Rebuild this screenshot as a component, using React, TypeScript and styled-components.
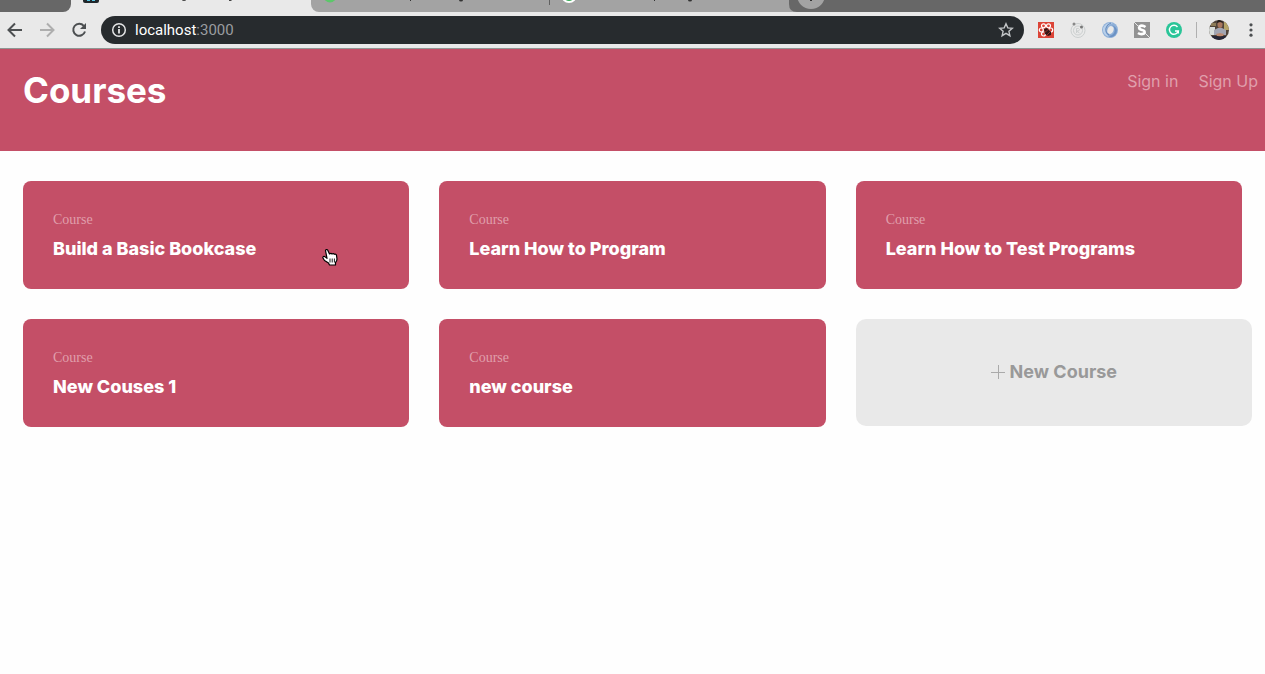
import React from "react";
import styled, { createGlobalStyle } from "styled-components";

const Global = createGlobalStyle`
  * { box-sizing: border-box; }
  body { margin: 0; background: #fefefe; font-family: Inter, sans-serif; overflow-x: hidden; }
  button, input { font: inherit; }
`;

const TabStrip = styled.div`
  display: flex;
  height: 12px;
  background: #e9e9e9;
  overflow: hidden;
`;
const StripEdge = styled.div<{ $side: "left" | "right" }>`
  background: #676767;
  ${(p) => (p.$side === "left" ? "width: 71px; border-bottom-right-radius: 8px;" : "flex: 1;")}
`;
const ActiveTab = styled.div`
  width: 240px;
`;
const IdleTabs = styled.div`
  width: 478px;
  background: #a3a3a3;
  border-bottom-left-radius: 8px;
`;
const NewTabArea = styled.div`
  background: #676767;
`;
const StripArt = styled.svg`
  display: block;
`;

const Toolbar = styled.div`
  display: flex;
  align-items: center;
  height: 37px;
  padding: 0 6px 0 7px;
  background: #e9e9e9;
  border-bottom: 1px solid #8f9693;
`;
const IconButton = styled.button`
  display: flex;
  padding: 0;
  border: 0;
  background: none;
`;
const NavButtons = styled.div`
  display: flex;
  gap: 16px;
  margin-right: 14px;
`;
const AddressBar = styled.div`
  display: flex;
  flex: 1;
  align-items: center;
  height: 28px;
  padding: 0 10px;
  border-radius: 14px;
  background: #272b2e;
`;
const Address = styled.div`
  flex: 1;
  padding-left: 8px;
  font: 15px/20px Roboto, sans-serif;
  color: #9a9da0;
`;
const Host = styled.span`
  color: #fff;
`;
const Extensions = styled.div`
  display: flex;
  align-items: center;
  gap: 16px;
  margin-left: 14px;
`;
const Divider = styled.span`
  width: 1px;
  height: 16px;
  margin: 0 12px 0 14px;
  background: #b0b0b0;
`;
const Profile = styled.div`
  display: flex;
  align-items: center;
  gap: 14px;
`;

const Header = styled.header`
  display: flex;
  justify-content: space-between;
  align-items: flex-start;
  height: 102px;
  padding: 20px 7px 0 23px;
  background: #c44f67;
`;
const Title = styled.h1`
  margin: 0;
  font-size: 35px;
  line-height: 42px;
  font-weight: 700;
  color: #fff;
`;
const Links = styled.nav`
  display: flex;
  gap: 20px;
  padding-top: 2px;
`;
const NavLink = styled.a`
  font-size: 16px;
  line-height: 20px;
  text-decoration: none;
  color: #e09fac;
`;

const Grid = styled.main`
  display: grid;
  grid-template-columns: repeat(3, minmax(0, 1fr));
  gap: 30px;
  padding: 30px 23px;
`;
const Card = styled.article`
  height: 108px;
  padding: 30px;
  border-radius: 8px;
  background: #c44f67;
`;
const Kind = styled.p`
  margin: 0;
  font: 14px/18px "Liberation Serif", serif;
  color: #e09fac;
`;
const CardTitle = styled.h2`
  margin: 9px 0 0;
  font-size: 18px;
  line-height: 22px;
  font-weight: 800;
  color: #fff;
`;
const NewCourse = styled.button`
  display: flex;
  align-items: center;
  justify-content: center;
  gap: 5px;
  height: 107px;
  margin-right: -10px;
  padding: 0 0 2px;
  border: 0;
  border-radius: 10px;
  background: #e9e9e9;
  color: #999;
  font-size: 18px;
  font-weight: 700;
`;
const Pointer = styled.svg`
  position: absolute;
  left: 322px;
  top: 248px;
  pointer-events: none;
`;

const courses = ["Build a Basic Bookcase", "Learn How to Program", "Learn How to Test Programs", "New Couses 1", "new course"];

const Arrow = ({ flip }: { flip?: boolean }) => (
  <svg width="16" height="16" viewBox="0 0 16 16" fill="none" stroke={flip ? "#aeaeae" : "#4c4f51"} strokeWidth="2">
    {flip ? <path d="M1 8h13M8 1.500l6.500 6.500L8 14.500" /> : <path d="M15 8H2M8 1.500L1.500 8L8 14.500" />}
  </svg>
);

export default function App() {
  return (
    <>
      <Global />
      <TabStrip>
        <StripEdge $side="left" />
        <ActiveTab>
          <StripArt width="240" height="12">
            <path d="M12 0h16v1q0 2-2 2H14q-2 0-2-2z" fill="#20272b" />
            <path d="M16 0h3v1h-3zM21 0h3v1h-3z" fill="#56c7e6" />
            <path d="M111 0h4q0 1-2 1t-2-1zM158 0h3l-1 1h-2z" fill="#444" />
          </StripArt>
        </ActiveTab>
        <IdleTabs>
          <StripArt width="478" height="12">
            <circle cx="19" cy="-4" r="6.500" fill="#5cc76a" />
            <path d="M99 0h1v1h-1zM148 0h4q0 1.500-2 1.500t-2-1.500zM343 0h1v1h-1zM377 0h4q0 1.500-2 1.500t-2-1.500z" fill="#333" />
            <path d="M238.500 0v5" stroke="#606060" />
            <circle cx="258" cy="-5" r="8" fill="#fff" />
            <circle cx="258" cy="-5" r="6" fill="#35ad55" />
          </StripArt>
        </IdleTabs>
        <NewTabArea>
          <StripArt width="50" height="12">
            <path d="M0 4q0 8 8 8H0z" fill="#a3a3a3" />
            <circle cx="22" cy="-5" r="14" fill="#a3a3a3" />
            <path d="M21 0h2v1h-2z" fill="#333" />
          </StripArt>
        </NewTabArea>
        <StripEdge $side="right" />
      </TabStrip>

      <Toolbar>
        <NavButtons>
          <IconButton aria-label="Back"><Arrow /></IconButton>
          <IconButton aria-label="Forward"><Arrow flip /></IconButton>
          <IconButton aria-label="Reload">
            <svg width="16" height="16" viewBox="0 0 16 16" fill="none">
              <path d="M12.800 3.800A6 6 0 1 0 14 9.500" stroke="#4c4f51" strokeWidth="2" />
              <path d="M15 1v6H9z" fill="#4c4f51" />
            </svg>
          </IconButton>
        </NavButtons>
        <AddressBar>
          <svg width="16" height="16" viewBox="0 0 16 16" fill="none" stroke="#e4e5e6" strokeWidth="1.500">
            <circle cx="8" cy="8" r="6.300" />
            <path d="M8 7v4.500M8 4.300v1.700" strokeWidth="1.800" />
          </svg>
          <Address><Host>localhost</Host>:3000</Address>
          <IconButton aria-label="Bookmark this page">
            <svg width="16" height="16" viewBox="0 0 16 16" fill="none" stroke="#c3c6c8" strokeWidth="1.400">
              <path d="M8 1.800l1.800 4.100 4.500.4-3.400 3 1 4.400L8 11.400l-3.900 2.300 1-4.400-3.400-3 4.500-.4z" />
            </svg>
          </IconButton>
        </AddressBar>
        <Extensions>
          <svg width="16" height="16" viewBox="0 0 16 16">
            <path d="M0 0h16v16H0z" fill="#dc4437" />
            <g fill="none" stroke="#fff" strokeWidth="1.200">
              <circle cx="5.500" cy="3.800" r="2" /><circle cx="10.500" cy="3.800" r="2" />
              <circle cx="3.300" cy="8" r="2" /><circle cx="12.700" cy="8" r="2" />
              <circle cx="5.500" cy="12" r="2" />
            </g>
            <path d="M6 7l3-1 4 4v3l-3 1-3-2z" fill="#321716" />
            <path d="M6 11l5-4M9 13l4-4" stroke="#a8352c" strokeWidth="0.800" />
          </svg>
          <svg width="16" height="16" viewBox="0 0 16 16" fill="none" stroke="#cbcfcf">
            <circle cx="8" cy="8.500" r="7" /><circle cx="8" cy="8.500" r="4.500" />
            <path d="M6.500 11V6.500h2q2 1 0 2.500h-2l3 2" />
            <circle cx="4" cy="2" r="1.500" fill="#888" stroke="none" /><circle cx="11.500" cy="5" r="1.500" fill="#777" stroke="none" />
          </svg>
          <svg width="16" height="16" viewBox="0 0 16 16">
            <circle cx="8" cy="8" r="8" fill="#8fb0d8" />
            <path d="M1 6Q4 0 11 1Q4 3 4 9Q4 13 8 15Q2 14 1 9z" fill="#b9d0ea" />
            <path d="M10 3Q14 6 12 11Q10 14 6 14Q11 17 14 12Q17 6 10 3z" fill="#6b92c4" />
            <path d="M9 1Q5 2 4 6Q3 11 7 13" fill="none" stroke="#6087ba" />
            <ellipse cx="8.500" cy="8" rx="3" ry="4" fill="#e9e9e9" transform="rotate(20 8.500 8)" />
          </svg>
          <svg width="16" height="16" viewBox="0 0 16 16">
            <path d="M0 0h16v16H0z" fill="#929292" />
            <path d="M11.500 5Q8 2.500 5.500 4.500Q4 7 8 8Q12 9 10 11.500Q7 13 4 11" stroke="#fff" strokeWidth="2.700" fill="none" />
            <path d="M0 0l5 5M11 11l5 5" stroke="#e9e9e9" />
          </svg>
          <svg width="16" height="16" viewBox="0 0 16 16" fill="none">
            <circle cx="8" cy="8" r="8" fill="#2ac598" />
            <path d="M11.500 5A4.500 4.500 0 1 0 12.300 9H9M12.300 8.500v3" stroke="#fff" strokeWidth="1.400" />
          </svg>
        </Extensions>
        <Divider />
        <Profile>
          <svg width="20" height="20" viewBox="0 0 20 20">
            <defs><clipPath id="avatar"><circle cx="10" cy="10" r="10" /></clipPath></defs>
            <g clipPath="url(#avatar)">
              <path d="M0 0h20v20H0z" fill="#51443a" />
              <path d="M0 7h6v8H0z" fill="#d8dddb" />
              <path d="M2 3h5v3H2z" fill="#8d7c57" />
              <path d="M15 2h5v8h-5z" fill="#b5a568" />
              <path d="M5 10l4-2h4l4 2v5H5z" fill="#a2a5b2" />
              <ellipse cx="11" cy="4.500" rx="2.500" ry="3.500" fill="#a9785e" />
              <path d="M8 3q0-4 3-3t3 3l-3-1z" fill="#231d1b" />
              <path d="M7 14l4-1 4 1-1 2H8z" fill="#bd8a72" />
              <path d="M3 16h5l3 1 3-1h3v4H3z" fill="#252536" />
            </g>
          </svg>
          <IconButton aria-label="Browser menu">
            <svg width="16" height="16" viewBox="0 0 16 16" fill="#4c4f51">
              <circle cx="8" cy="2.800" r="1.600" /><circle cx="8" cy="8" r="1.600" /><circle cx="8" cy="13.200" r="1.600" />
            </svg>
          </IconButton>
        </Profile>
      </Toolbar>

      <Header>
        <Title>Courses</Title>
        <Links>
          <NavLink href="#signin">Sign in</NavLink>
          <NavLink href="#signup">Sign Up</NavLink>
        </Links>
      </Header>
      <Grid>
        {courses.map((name) => (
          <Card key={name}>
            <Kind>Course</Kind>
            <CardTitle>{name}</CardTitle>
          </Card>
        ))}
        <NewCourse>
          <svg width="14" height="14" viewBox="0 0 14 14" stroke="#aaa"><path d="M0 7.500h14M7.500 0v14" /></svg>
          New Course
        </NewCourse>
      </Grid>
      <Pointer width="16" height="18" viewBox="0 0 16 18">
        <path d="M3.500 2.500Q4 1 5.500 1.800L7.500 6Q9 4.800 10 6Q11.500 5 12.300 6.300Q14 5.700 14.500 7.300L15 11Q15 13 13.500 14.500V17H7.500L6.500 15L2.500 12.500L.8 9.800Q1 8 2.800 8.600L5 10.300z" fill="#fff" stroke="#000" strokeWidth="1.200" strokeLinejoin="round" />
        <path d="M8 10.500v4M10.200 10.500v4M12.400 10.500v4" stroke="#000" strokeWidth="0.900" />
      </Pointer>
    </>
  );
}
